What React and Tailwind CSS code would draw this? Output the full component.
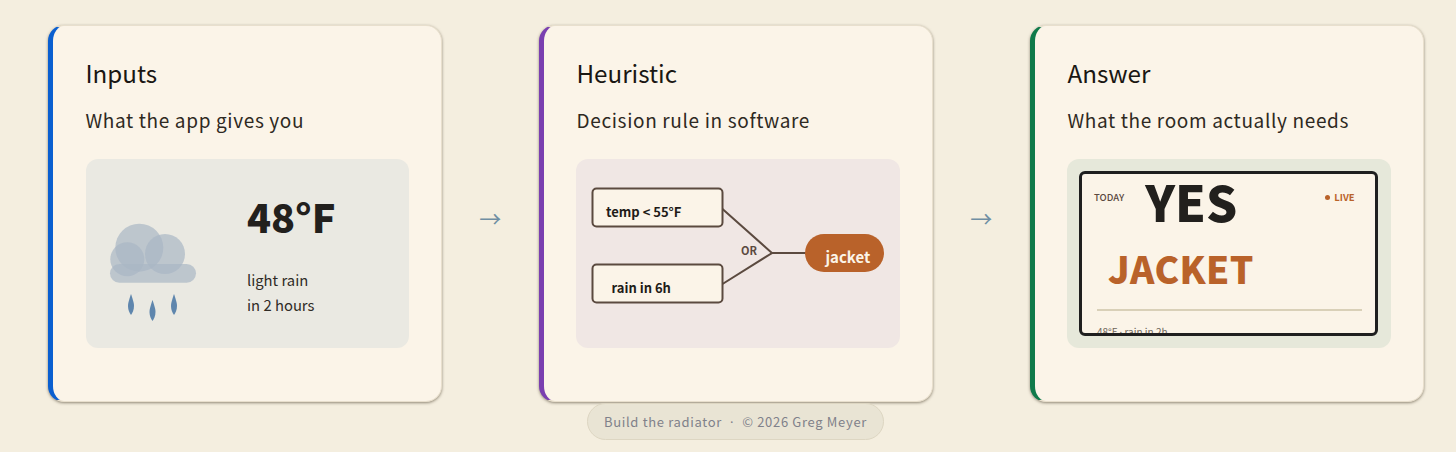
const FONT = "font-['Noto_Sans_CJK_JP','Noto_Sans',sans-serif]";

function Card({ accent, title, subtitle, children }) {
  return (
    <section className={`w-[393.67px] h-[377px] shrink-0 rounded-[16px] border border-[#e8dfcd] border-l-[5px] ${accent} bg-[#fbf4e8] pl-[32.5px] pr-[32px] pt-[27px] shadow-[0_1px_3px_rgba(60,50,30,0.55)]`}>
      <h2 className="text-[24.200px] leading-[40px] font-normal text-[#1a1713]">{title}</h2>
      <p className="mt-[11px] text-[19px] leading-[32px] font-normal tracking-[0.65px] text-[#2e2922]">{subtitle}</p>
      <div className="mt-[23px]">{children}</div>
    </section>
  );
}

function Arrow() {
  return <div className="w-[97.33px] shrink-0 flex justify-center pt-[6px] text-[22px] leading-none font-normal text-[#6f8ea3]">→</div>;
}

function Cloud() {
  return (
    <svg width="94" height="106" viewBox="0 0 94 106" className="shrink-0">
      <g fill="#a9b6c4" fillOpacity="0.7">
        <circle cx="34.300" cy="31.700" r="24" />
        <circle cx="60" cy="38" r="20" />
        <circle cx="22.300" cy="43.300" r="17" />
        <rect x="5" y="48" width="86" height="18.700" rx="9.350" />
      </g>
      <g fill="#5f86ad">
        <path d="M26 78 C24 84 23 87 23 90 C23 94 24.500 97 26 99 C27.500 97 29 94 29 90 C29 87 28 84 26 78Z" />
        <path d="M47.500 84 C45.500 90 44.500 93 44.500 96 C44.500 100 46 103 47.500 105 C49 103 50.500 100 50.500 96 C50.500 93 49.500 90 47.500 84Z" />
        <path d="M69 78 C67 84 66 87 66 90 C66 94 67.500 97 69 99 C70.500 97 72 94 72 90 C72 87 71 84 69 78Z" />
      </g>
    </svg>
  );
}

function Inputs() {
  return (
    <div className="h-[189px] rounded-[12px] bg-[#eae9e2] flex pl-[19.5px] pt-[33px]">
      <div className="w-[142px] pt-[24px]"><Cloud /></div>
      <div>
        <div className="text-[39.500px] leading-[48px] font-black text-[#22201d]">48°F</div>
        <div className="mt-[28px] text-[14.800px] leading-[24.500px] text-[#2f2b26]">light rain<br />in 2 hours</div>
      </div>
    </div>
  );
}

function Heuristic() {
  const stroke = "#5b4a3f";
  return (
    <div className="h-[189px] rounded-[12px] bg-[#f0e7e4]">
      <svg width="324" height="189" viewBox="0 0 324 189">
        <rect x="16.500" y="29.500" width="130" height="38" rx="4" fill="#fbf4e8" stroke={stroke} strokeWidth="2" />
        <rect x="16.500" y="105.500" width="130" height="38" rx="4" fill="#fbf4e8" stroke={stroke} strokeWidth="2" />
        <path d="M146.500 50 L196 94 L146.500 125 M196 94 L230 94" fill="none" stroke={stroke} strokeWidth="2" />
        <rect x="229" y="75" width="79" height="38" rx="19" fill="#b9622a" />
        <text x="30" y="58" fontSize="13" fontWeight="700" fill="#1f1c18">temp &lt; 55°F</text>
        <text x="35.500" y="134" fontSize="13" fontWeight="700" fill="#1f1c18">rain in 6h</text>
        <text x="165" y="96" fontSize="11" fontWeight="700" fill="#5b4a3f">OR</text>
        <text x="249.500" y="104" fontSize="15" fontWeight="700" fill="#fbf4e8">jacket</text>
      </svg>
    </div>
  );
}

function Answer() {
  return (
    <div className="h-[189px] rounded-[12px] bg-[#e6e8da] pl-[12px] pr-[13px] pt-[12px]">
      <div className="h-[165px] rounded-[6px] border-[3px] border-[#1f1f1f] bg-[#fbf4e8] overflow-hidden pl-[11.5px] pr-[20px]">
        <div className="flex items-start">
          <span className="mt-[15px] text-[9.500px] leading-[16px] font-medium text-[#5b4a3f]">TODAY</span>
          <span className="ml-[21px] text-[49px] leading-[54px] font-black text-[#22201d]">YES</span>
          <span className="ml-auto mt-[15px] flex items-center gap-[4px] text-[9.500px] leading-[16px] font-bold text-[#b9622a]">
            <span className="w-[5px] h-[5px] rounded-full bg-[#b9622a]" />
            LIVE
          </span>
        </div>
        <div className="ml-[14px] mt-[15px] text-[37px] leading-[50px] font-black tracking-[0.4px] text-[#b9622a]">JACKET</div>
        <div className="mt-[16px] ml-[3px] -mr-[7px] h-[2px] bg-[#d9d0b8]" />
        <div className="ml-[3px] mt-[13px] text-[10px] leading-[16px] text-[#6d655a]">48°F <span className="font-['Noto_Sans']">·</span> rain in 2h</div>
      </div>
    </div>
  );
}

export default function App() {
  return (
    <div className={`w-[1456px] h-[452px] overflow-hidden bg-[#f4eedf] pt-[25px] ${FONT}`}>
      <div className="flex items-center pl-[48px]">
        <Card accent="border-l-[#0a5fd0]" title="Inputs" subtitle="What the app gives you"><Inputs /></Card>
        <Arrow />
        <Card accent="border-l-[#7a3fb0]" title="Heuristic" subtitle="Decision rule in software"><Heuristic /></Card>
        <Arrow />
        <Card accent="border-l-[#0f7a4a]" title="Answer" subtitle="What the room actually needs"><Answer /></Card>
      </div>
      <div className="flex justify-center mt-px pl-[15px]">
        <div className="flex items-center h-[37px] rounded-full border border-[#ddd6c2] bg-[#e9e4d4] px-[16px] text-[13px] font-normal tracking-[0.67px] text-[#80818a]">
          <span>Build the radiator</span>
          <span className="mx-[8px] relative top-[1px] font-['Noto_Sans']">·</span>
          <span>© 2026 Greg Meyer</span>
        </div>
      </div>
    </div>
  );
}
